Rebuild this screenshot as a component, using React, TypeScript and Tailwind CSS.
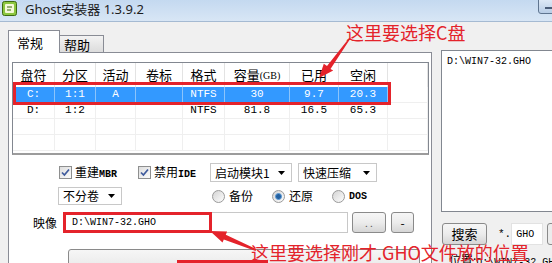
import React from 'react';

const cjk = "font-['Noto_Sans_CJK_SC',sans-serif]";

const cols = [
  { label: '盘符', w: 'w-[42px]' },
  { label: '分区', w: 'w-[41px]' },
  { label: '活动', w: 'w-[40px]' },
  { label: '卷标', w: 'w-[47px]' },
  { label: '格式', w: 'w-[42px]' },
  { label: '容量', w: 'w-[65px]', unit: true },
  { label: '已用', w: 'w-[49px]' },
  { label: '空闲', w: 'w-[49px]' },
];

const rows = [
  { cells: ['C:', '1:1', 'A', '', 'NTFS', '30', '9.7', '20.3'], selected: true },
  { cells: ['D:', '1:2', '', '', 'NTFS', '81.8', '16.5', '65.3'], selected: false },
  { cells: ['', '', '', '', '', '', '', ''], selected: false },
  { cells: ['', '', '', '', '', '', '', ''], selected: false },
];

function AppIcon() {
  return (
    <svg width="15" height="15" viewBox="0 0 15 15" className="ml-[2px] mt-[1px]">
      <rect x="0.5" y="0.5" width="14" height="14" rx="2" fill="#8cc63f" stroke="#3d6b12" />
      <rect x="3" y="3" width="9" height="9" rx="1" fill="#f4f9d8" />
      <path d="M5 6h5M5 9h4" stroke="#3d6b12" strokeWidth="1.2" />
    </svg>
  );
}

function Check() {
  return (
    <span className="w-[13px] h-[13px] shrink-0 border border-[#8e8f8f] bg-linear-to-br from-[#dedede] to-[#fbfbfb] flex items-center justify-center">
      <svg width="9" height="9" viewBox="0 0 9 9">
        <path d="M1 4.5 L3.4 7 L8 1.5" stroke="#3e5a9c" strokeWidth="1.7" fill="none" />
      </svg>
    </span>
  );
}

function Radio({ checked }: { checked?: boolean }) {
  return (
    <span className="w-[13px] h-[13px] shrink-0 rounded-full border border-[#9a9a9a] bg-linear-to-br from-[#d4d4d4] to-[#fdfdfd] flex items-center justify-center">
      {checked && <span className="w-[7px] h-[7px] rounded-full bg-[#23609f] border border-[#5d9ad6]" />}
    </span>
  );
}

function Combo({ label, w }: { label: string; w: string }) {
  return (
    <div className={`${w} h-full border border-[#c8c8c8] bg-white flex items-center justify-between pl-[4px] pr-[6px]`}>
      <span className="leading-none">{label}</span>
      <svg width="7" height="4" viewBox="0 0 7 4">
        <path d="M0 0h7L3.5 4z" fill="#000" />
      </svg>
    </div>
  );
}

function Btn({ w, h, children }: { w: string; h: string; children?: React.ReactNode }) {
  return (
    <div className={`${w} ${h} shrink-0 border border-[#8a8a8a] rounded-[3px] bg-linear-to-b from-[#f6f6f6] via-[#ececec] to-[#d6d6d6] flex items-center justify-center`}>
      {children}
    </div>
  );
}

export default function App() {
  return (
    <div className={`relative w-[552px] h-[263px] overflow-hidden bg-[#f0f0f0] text-[12px] text-black ${cjk}`}>
      {/* title bar */}
      <div className="relative h-[22px] flex items-start bg-linear-to-b from-[#c4d9f0] to-[#d8e6f5] border-b border-[#a5bad2]">
        <AppIcon />
        <span className="ml-[8px] mt-[1px] text-[13px] leading-[16px] text-[#1c1c1c] font-['Noto_Sans','Noto_Sans_CJK_SC',sans-serif]">
          Ghost安装器 1.3.9.2
        </span>
        <div className="absolute left-[538px] top-[-3px] w-[26px] h-[17px] rounded-[3px] border border-[#5f7590] bg-linear-to-b from-[#e3edf8] to-[#b8cde6] flex items-end pb-[4px] pl-[6px]">
          <span className="w-[8px] h-[2px] bg-white border border-[#4a5d78]" />
        </div>
      </div>

      <div className="flex">
        {/* left: tab control */}
        <div className="w-[432px] shrink-0 pl-[8px]">
          <div className="h-[30px] flex items-end">
            <div className="relative z-10 -mb-px w-[52px] h-[23px] bg-white border border-b-0 border-[#898c95] pl-[8px] pt-[2px] text-[13px]">
              常规
            </div>
            <div className="w-[44px] h-[17px] border border-l-0 border-b-0 border-[#898c95] bg-linear-to-b from-[#f3f3f3] to-[#dcdcdc] pl-[4px] text-[13px] leading-[17px]">
              帮助
            </div>
          </div>

          <div className="w-[424px] h-[230px] border border-[#898c95] bg-white">
            {/* list view */}
            <div className="mt-[9px] ml-[3px] w-[417px] h-[93px] border border-[#828790] border-b-2 border-b-[#9c9c9c] bg-white overflow-hidden">
              <div className="h-[24px] flex">
                {cols.map((c, i) => (
                  <div key={i} className={`${c.w} shrink-0 h-full border-r border-[#e3e3e3] flex items-center justify-center text-[13px]`}>
                    {c.label}
                    {c.unit && <span className="text-[10px] font-['Liberation_Serif',serif]">(GB)</span>}
                  </div>
                ))}
                <div className="w-[40px] h-full border-r border-[#e3e3e3]" />
              </div>
              {rows.map((r, ri) => (
                <div key={ri} className="h-[16px] flex border-b border-[#efefef]">
                  {r.cells.map((cell, ci) => (
                    <div
                      key={ci}
                      className={`${cols[ci].w} shrink-0 h-full flex items-center justify-center text-[11px] font-['Liberation_Mono',monospace] border-r ${
                        r.selected ? 'bg-[#3399ff] text-white border-[#8cc4fb]' : 'border-[#efefef]'
                      }`}
                    >
                      {cell}
                    </div>
                  ))}
                  <div className="w-[40px] h-full border-r border-[#efefef]" />
                </div>
              ))}
            </div>

            {/* option row 1 */}
            <div className="mt-[8px] h-[19px] pl-[50px] flex items-center">
              <div className="w-[79px] flex items-center">
                <Check />
                <span className="ml-[3px]">
                  重建<span className="text-[10px] font-['Liberation_Mono',monospace] font-bold">MBR</span>
                </span>
              </div>
              <div className="w-[72px] flex items-center">
                <Check />
                <span className="ml-[3px]">
                  禁用<span className="text-[10px] font-['Liberation_Mono',monospace] font-bold">IDE</span>
                </span>
              </div>
              <Combo label="启动模块1" w="w-[82px]" />
              <div className="ml-[6px] h-full">
                <Combo label="快速压缩" w="w-[79px]" />
              </div>
            </div>

            {/* option row 2 */}
            <div className="mt-[5px] h-[18px] pl-[49px] flex items-center">
              <Combo label="不分卷" w="w-[64px]" />
              <div className="ml-[90px] w-[60px] flex items-center">
                <Radio />
                <span className="ml-[4px]">备份</span>
              </div>
              <div className="w-[60px] flex items-center">
                <Radio checked />
                <span className="ml-[4px]">还原</span>
              </div>
              <div className="w-[60px] flex items-center">
                <Radio />
                <span className="ml-[4px] text-[10px] font-['Liberation_Mono',monospace] font-bold">DOS</span>
              </div>
            </div>

            {/* image row */}
            <div className="mt-[7px] h-[21px] pl-[24px] flex items-center">
              <span className="w-[32px]">映像</span>
              <div className="w-[283px] h-full border border-[#c8c8c8] bg-white flex items-center pl-[6px] text-[10px] font-['Liberation_Mono',monospace]">
                D:\WIN7-32.GHO
              </div>
              <div className="ml-[4px]">
                <Btn w="w-[34px]" h="h-[21px]">
                  <span className="text-[10px] text-[#555] leading-none">. .</span>
                </Btn>
              </div>
              <div className="ml-[5px]">
                <Btn w="w-[23px]" h="h-[21px]">
                  <span className="text-[12px] leading-none">-</span>
                </Btn>
              </div>
            </div>

            {/* start button */}
            <div className="mt-[16px] pl-[59px]">
              <Btn w="w-[352px]" h="h-[30px]" />
            </div>
          </div>
        </div>

        {/* right column */}
        <div className="ml-[9px] pt-[28px] w-[125px] shrink-0">
          <div className="h-[162px] border border-[#828790] bg-white pl-[5px] pt-[3px] text-[10px] font-['Liberation_Mono',monospace]">
            D:\WIN7-32.GHO
          </div>
          <div className="mt-[11px] h-[22px] flex items-center">
            <div className="ml-[1px]">
              <Btn w="w-[45px]" h="h-[22px]">
                <span className="text-[13px]">搜索</span>
              </Btn>
            </div>
            <span className="ml-[11px] w-[14px] text-[11px] font-['Liberation_Mono',monospace]">*.</span>
            <div className="w-[34px] h-full bg-white border border-[#e2e2e2] flex items-center pl-[4px] text-[10px] font-['Liberation_Mono',monospace]">
              GHO
            </div>
            <div className="ml-[4px] w-[20px] h-full border border-[#8a8a8a] rounded-[3px] bg-[#ececec]" />
          </div>
          <div className="mt-[6px] pl-[8px] whitespace-nowrap">
            位置:<span className="text-[10px] font-['Liberation_Mono',monospace]">D:\WIN7-32.GHO</span>
          </div>
        </div>
      </div>

      {/* annotations */}
      <div className="absolute left-[13px] top-[82px] w-[378px] h-[23px] border-[3px] border-[#e4232b]" />
      <div className="absolute left-[63px] top-[212px] w-[149px] h-[21px] border-[3px] border-[#e4232b]" />
      <div className="absolute left-[177px] top-[260px] w-[91px] h-[3px] bg-[#e4232b]" />
      <svg className="absolute left-0 top-0" width="552" height="263" viewBox="0 0 552 263">
        <polygon
          points="349.4,37.7 327,65.9 323.8,63.7 319,78 333.2,70.6 330.5,68.9 350.6,38.3"
          fill="#e4232b"
        />
        <polygon
          points="210,231 227.1,231.6 225.8,234.8 256.4,249.1 255.6,250.9 223.8,239.4 222.5,242.6"
          fill="#e4232b"
        />
      </svg>
      <div className="absolute left-[346px] top-[23px] text-[18px] leading-[18px] text-[#e4232b] whitespace-nowrap">
        这里要选择C盘
      </div>
      <div className="absolute left-[251px] top-[243px] text-[18px] leading-[18px] text-[#e4232b] whitespace-nowrap">
        这里要选择刚才.GHO文件放的位置
      </div>
    </div>
  );
}
